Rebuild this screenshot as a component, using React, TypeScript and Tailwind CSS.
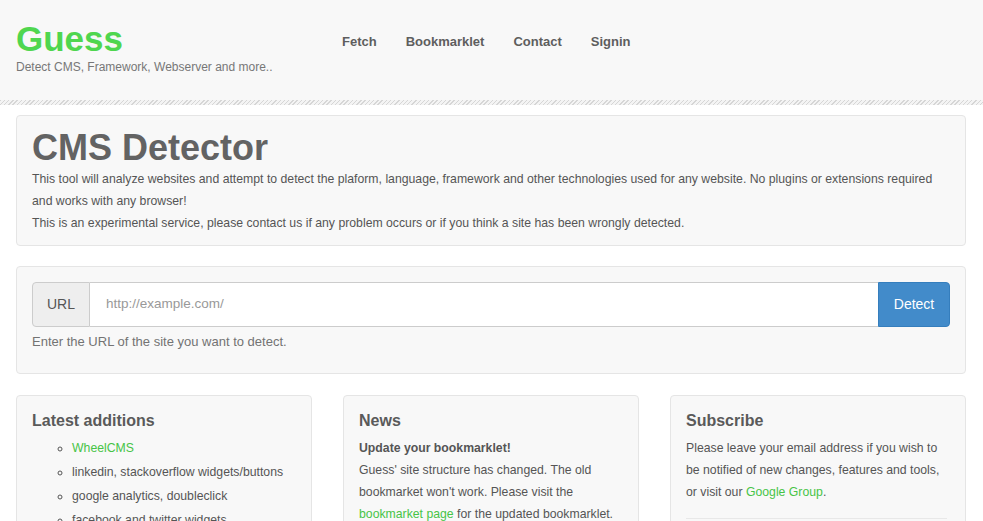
export default function App() {
  return (
    <div className="min-h-screen bg-white font-['Liberation_Sans',Arial,sans-serif] text-[#555]">
      {/* Header */}
      <header className="bg-[#f8f8f8]">
        <div className="h-[100px] flex items-start pl-4">
          <div className="w-[326px] pt-[20px]">
            <h1 className="text-[35px] leading-[38px] font-bold text-[#4fd64f]">Guess</h1>
            <p className="text-[12px] leading-[14px] mt-[2px] text-[#777]">Detect CMS, Framework, Webserver and more..</p>
          </div>
          <nav className="flex gap-[29px] pt-[32px] text-[13px] font-bold text-[#5e5e5e]">
            <a>Fetch</a>
            <a>Bookmarklet</a>
            <a>Contact</a>
            <a>Signin</a>
          </nav>
        </div>
        <div className="h-[5px] bg-[repeating-linear-gradient(135deg,#d6d6d6_0,#d6d6d6_1px,#f4f4f4_1px,#f4f4f4_3px)]" />
      </header>

      <main className="pl-4 pr-[17px] pt-[10px] flex flex-col">
        {/* Intro */}
        <section className="bg-[#f8f8f8] border border-[#e5e5e5] rounded-[4px] px-[15px] pt-[12px] pb-[11px]">
          <h2 className="text-[36px] leading-[40px] font-bold text-[#636363]">CMS Detector</h2>
          <p className="text-[12.25px] leading-[22px] text-[#555]">
            This tool will analyze websites and attempt to detect the plaform, language, framework and other technologies used for any website. No plugins or extensions required and works with any browser!
            <br />
            This is an experimental service, please contact us if any problem occurs or if you think a site has been wrongly detected.
          </p>
        </section>

        {/* Form */}
        <section className="mt-[20px] bg-[#f8f8f8] border border-[#e5e5e5] rounded-[4px] px-[15px] pt-[15px] pb-[22px]">
          <div className="flex h-[45px]">
            <span className="w-[58px] flex items-center justify-center bg-[#eee] border border-[#ccc] rounded-l-[4px] text-[14px] text-[#555]">URL</span>
            <input
              placeholder="http://example.com/"
              className="flex-1 bg-white border-y border-[#ccc] px-4 text-[13.5px] outline-none placeholder:text-[#999]"
            />
            <button className="w-[72px] bg-[#428bca] border border-[#357ebd] rounded-r-[4px] text-[14px] text-white">Detect</button>
          </div>
          <p className="mt-[6px] text-[13px] leading-[18px] text-[#737373]">Enter the URL of the site you want to detect.</p>
        </section>

        {/* Columns */}
        <div className="mt-[21px] grid grid-cols-3 gap-[31px]">
          <section className="bg-[#f8f8f8] border border-[#e5e5e5] rounded-[4px] pl-[15px] pr-[18px] pt-[14px] h-[140px]">
            <h3 className="text-[16px] leading-[22px] font-bold text-[#5a5a5a]">Latest additions</h3>
            <ul className="mt-[4px] pl-[40px] list-[circle] text-[12.25px] leading-[24px] text-[#555]">
              <li><a className="text-[#47c447]">WheelCMS</a></li>
              <li>linkedin, stackoverflow widgets/buttons</li>
              <li>google analytics, doubleclick</li>
              <li>facebook and twitter widgets</li>
            </ul>
          </section>

          <section className="bg-[#f8f8f8] border border-[#e5e5e5] rounded-[4px] pl-[15px] pr-[18px] pt-[14px] h-[140px]">
            <h3 className="text-[16px] leading-[22px] font-bold text-[#5a5a5a]">News</h3>
            <p className="mt-[5px] text-[12.25px] leading-[22px] text-[#555]">
              <b>Update your bookmarklet!</b>
              <br />
              Guess' site structure has changed. The old bookmarket won't work. Please visit the{' '}
              <a className="text-[#47c447]">bookmarket page</a> for the updated bookmarklet.
            </p>
          </section>

          <section className="bg-[#f8f8f8] border border-[#e5e5e5] rounded-[4px] pl-[15px] pr-[18px] pt-[14px] h-[140px]">
            <h3 className="text-[16px] leading-[22px] font-bold text-[#5a5a5a]">Subscribe</h3>
            <p className="mt-[5px] text-[12.25px] leading-[22px] text-[#555]">
              Please leave your email address if you wish to be notified of new changes, features and tools, or visit our{' '}
              <a className="text-[#47c447]">Google Group</a>.
            </p>
            <hr className="mt-[15px] border-[#e8e8e8]" />
          </section>
        </div>
      </main>
    </div>
  );
}
